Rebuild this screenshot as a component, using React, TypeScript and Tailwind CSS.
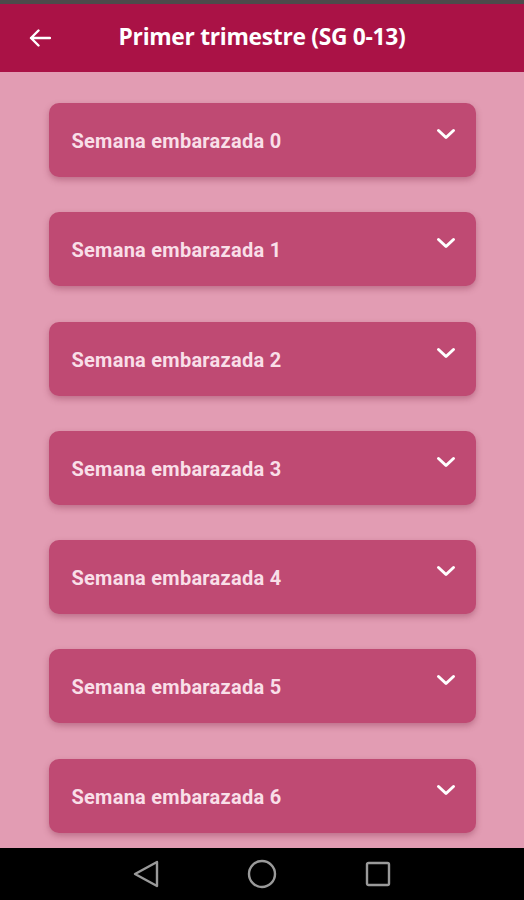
import React from "react";

const weeks = [0, 1, 2, 3, 4, 5, 6];

export default function App() {
  return (
    <div className="w-[524px] h-[900px] flex flex-col overflow-hidden bg-[#e29cb3]" style={{ fontFamily: "Roboto, 'Noto Sans', sans-serif" }}>
      <div className="h-[4px] bg-[#4d4a4b] shrink-0" />
      <div className="h-[68px] shrink-0 bg-[#aa1246] flex items-center relative">
        <div className="w-[80px] flex items-center pl-[29px]">
          <svg width="22" height="18" viewBox="0 0 22 18" fill="none">
            <path d="M21 9H2M9.5 1.5L2 9l7.5 7.5" stroke="#ffffff" strokeWidth="2.4" strokeLinecap="round" strokeLinejoin="round" />
          </svg>
        </div>
        <div className="absolute left-0 right-0 top-0 bottom-0 flex items-center justify-center pointer-events-none">
          <span className="text-white text-[22.8px] font-bold tracking-[-0.3px] mb-[2px]" style={{ fontFamily: "'Open Sans', 'Noto Sans', sans-serif" }}>
            Primer trimestre (SG 0-13)
          </span>
        </div>
      </div>
      <div className="flex-1 flex flex-col items-center pt-[31px] gap-[35.3px] overflow-hidden">
        {weeks.map((w) => (
          <div
            key={w}
            className="w-[427px] h-[74px] shrink-0 rounded-[10px] bg-[#bf4a73] shadow-[0_3px_6px_rgba(120,30,60,0.35)] flex items-start justify-between pl-[23px] pr-[20px]"
          >
            <span className="mt-[24px] text-[20px] tracking-[0.25px] font-bold text-[#f9dfe8] leading-[28px]">
              Semana embarazada {w}
            </span>
            <svg className="mt-[25px]" width="20" height="13" viewBox="0 0 20 13" fill="none">
              <path d="M2.5 2.5L10 9.5l7.5-7" stroke="#ffffff" strokeWidth="3" strokeLinecap="round" strokeLinejoin="round" />
            </svg>
          </div>
        ))}
      </div>
      <div className="h-[52px] shrink-0 bg-black flex items-center justify-center">
        <div className="flex items-center gap-[88px]">
          <svg width="26" height="28" viewBox="0 0 26 28" fill="none">
            <path d="M24 2L2 14l22 12z" stroke="#9a9a9a" strokeWidth="2.4" strokeLinejoin="round" />
          </svg>
          <svg width="30" height="30" viewBox="0 0 30 30" fill="none">
            <circle cx="15" cy="15" r="13" stroke="#9a9a9a" strokeWidth="2.4" />
          </svg>
          <svg width="26" height="26" viewBox="0 0 26 26" fill="none">
            <rect x="2" y="2" width="22" height="22" rx="1.5" stroke="#9a9a9a" strokeWidth="2.4" />
          </svg>
        </div>
      </div>
    </div>
  );
}
